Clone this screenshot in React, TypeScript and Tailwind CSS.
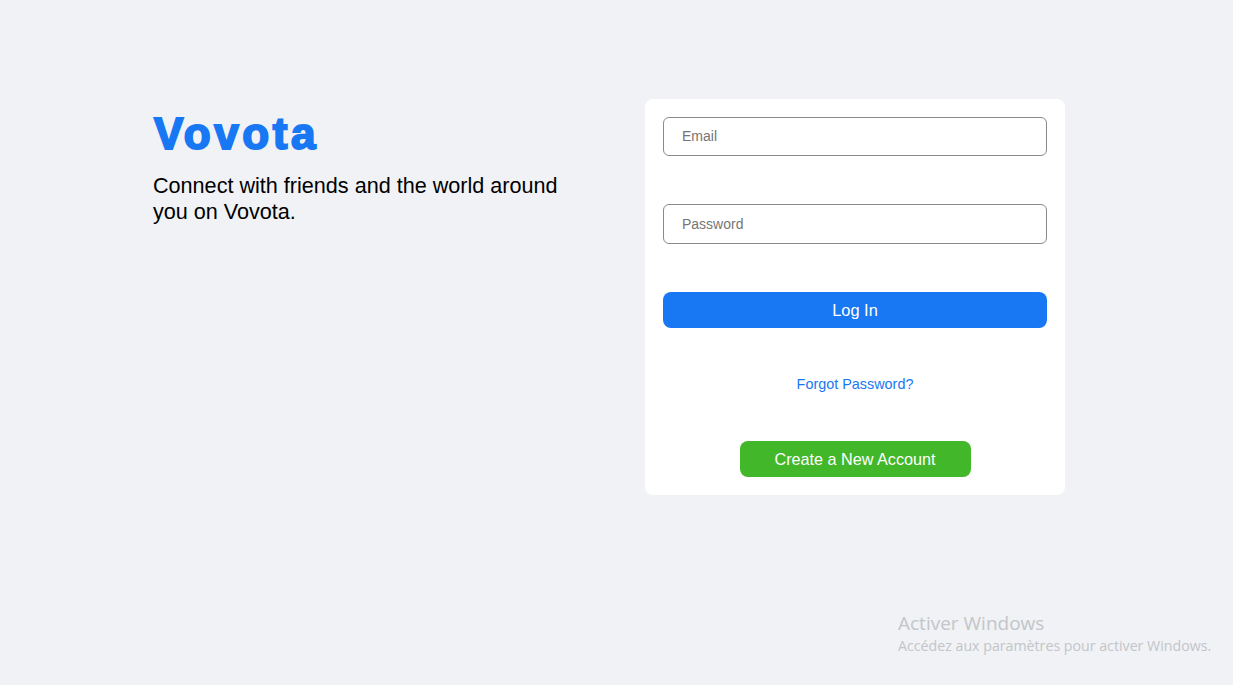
import React from "react";

export default function App() {
  return (
    <div
      className="relative min-h-[685px] w-full bg-[#f0f2f5]"
      style={{ fontFamily: '"Liberation Sans", Arial, sans-serif' }}
    >
      <div className="flex pl-[153px] pt-[99px]">
        <div className="w-[492px] pt-[7px]">
          <h1 className="pl-[1px] text-[44px] font-bold leading-[55px] tracking-[3.6px] text-[#1877f2] [-webkit-text-stroke:2px_#1877f2]">
            Vovota
          </h1>
          <p className="mt-[12px] w-[420px] text-[21.6px] leading-[26px] text-black">
            Connect with friends and the world around you on Vovota.
          </p>
        </div>
        <div className="flex w-[420px] flex-col rounded-lg bg-white px-[18px] pb-[18px] pt-[18px]">
          <input
            type="text"
            placeholder="Email"
            className="h-[39px] w-full rounded-md border border-[#8a8a8a] px-[18px] pb-[1px] text-[14px] text-black outline-none placeholder:text-[#757575]"
          />
          <input
            type="password"
            placeholder="Password"
            className="mt-[48px] h-[40px] w-full rounded-md border border-[#8a8a8a] px-[18px] text-[14px] text-black outline-none placeholder:text-[#757575]"
          />
          <button className="mt-[48px] h-[36px] w-full rounded-lg bg-[#1877f2] text-[16.4px] text-white">
            Log In
          </button>
          <a className="mt-[48px] block text-center text-[14.4px] leading-[17px] text-[#1877f2]">
            Forgot Password?
          </a>
          <button className="mx-auto mt-[48px] h-[36px] w-[231px] rounded-lg bg-[#42b72a] text-[16.2px] text-white">
            Create a New Account
          </button>
        </div>
      </div>
      <div
        className="absolute left-[898px] top-[610px] text-[#c3c5c9]"
        style={{ fontFamily: '"Open Sans", "Noto Sans", sans-serif' }}
      >
        <div className="text-[19px] leading-[26px]">Activer Windows</div>
        <div className="text-[14.2px] leading-[20px]">Accédez aux paramètres pour activer Windows.</div>
      </div>
    </div>
  );
}
